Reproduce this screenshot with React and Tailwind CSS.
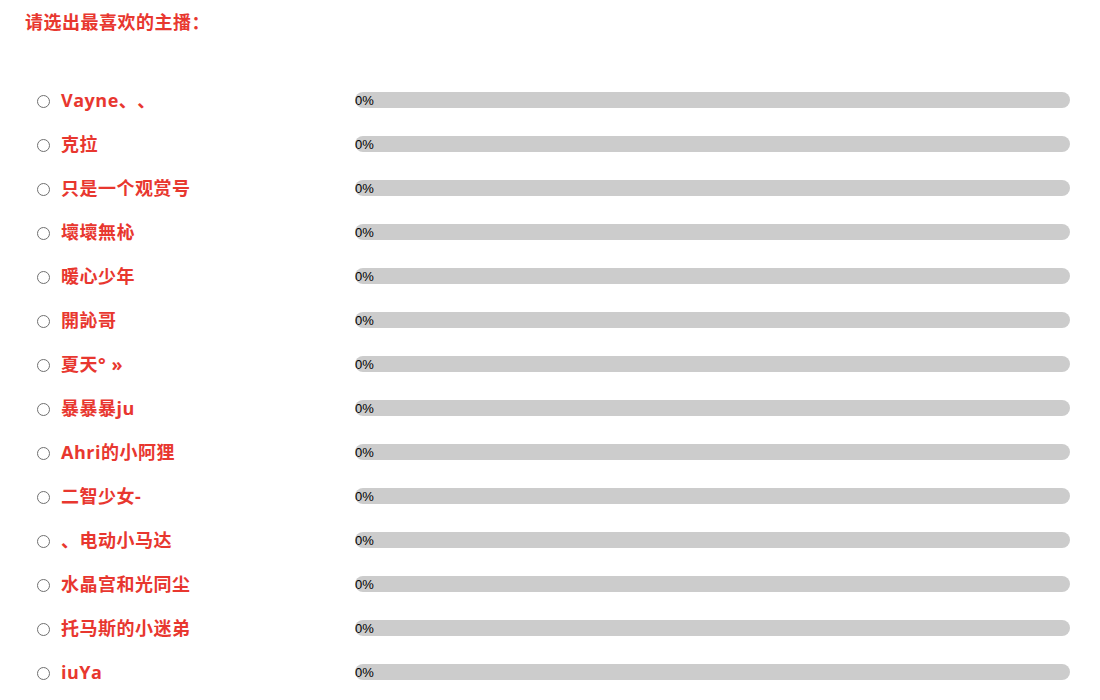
import React from "react";

const names = [
  "Vayne、、",
  "克拉",
  "只是一个观赏号",
  "壞壞無杺",
  "暖心少年",
  "開訫哥",
  "夏天° »",
  "暴暴暴ju",
  "Ahri的小阿狸",
  "二智少女-",
  "、电动小马达",
  "水晶宫和光同尘",
  "托马斯的小迷弟",
  "iuYa",
];

export default function App() {
  return (
    <div className="bg-white w-[1100px] h-[700px] overflow-hidden [text-spacing-trim:space-all]" style={{ fontFamily: '"Open Sans", "Noto Sans CJK SC", sans-serif' }}>
      <div className="pl-[25px] pt-[9px] text-[18px] font-bold text-[#e8372f] leading-[26px] tracking-[0.5px]">
        请选出最喜欢的主播：
      </div>
      <div className="mt-[43px]">
        {names.map((n) => (
          <div key={n} className="flex items-center h-[44px]">
            <div className="w-[355px] flex items-center pl-[37px]">
              <span className="w-[13px] h-[13px] mt-[2px] rounded-full border border-[#707070] bg-white shrink-0"></span>
              <span className="ml-[11px] text-[18px] font-bold text-[#e8372f] tracking-[0.5px] leading-none">{n}</span>
            </div>
            <div className="w-[715px] h-[16px] rounded-full bg-[#cccccc] flex items-center">
              <span className="text-[13px] text-black leading-none mt-[1px]" style={{ fontFamily: '"Liberation Sans", Arial, sans-serif' }}>0%</span>
            </div>
          </div>
        ))}
      </div>
    </div>
  );
}
